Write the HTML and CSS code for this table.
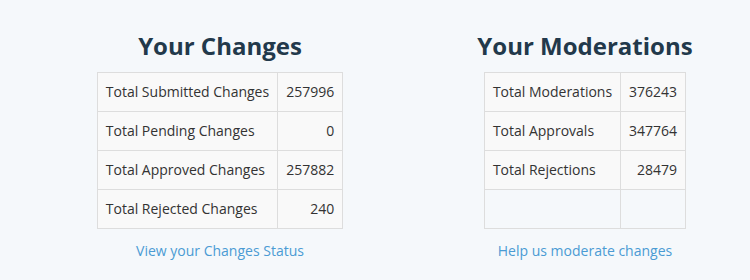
FILE: index.html
```html
<!DOCTYPE html>
<html>
<head>
<meta charset="utf-8">
<link rel="stylesheet" href="styles.css">
</head>
<body>
<main class="stats">
  <section class="panel">
    <h2 class="panel-title">Your Changes</h2>
    <table class="stat-table">
      <tr><td class="label">Total Submitted Changes</td><td class="num">257996</td></tr>
      <tr><td class="label">Total Pending Changes</td><td class="num">0</td></tr>
      <tr><td class="label">Total Approved Changes</td><td class="num">257882</td></tr>
      <tr><td class="label">Total Rejected Changes</td><td class="num">240</td></tr>
    </table>
    <a class="panel-link" href="#">View your Changes Status</a>
  </section>
  <section class="panel">
    <h2 class="panel-title">Your Moderations</h2>
    <table class="stat-table">
      <tr><td class="label">Total Moderations</td><td class="num">376243</td></tr>
      <tr><td class="label">Total Approvals</td><td class="num">347764</td></tr>
      <tr><td class="label">Total Rejections</td><td class="num">28479</td></tr>
      <tr class="empty"><td class="label">&nbsp;</td><td class="num">&nbsp;</td></tr>
    </table>
    <a class="panel-link" href="#">Help us moderate changes</a>
  </section>
</main>
</body>
</html>
```
FILE: styles.css
```css
html, body {
  margin: 0;
  padding: 0;
  overflow: hidden;
  background: #f5f8fb;
}
body {
  font-family: "Open Sans", "Liberation Sans", sans-serif;
  font-size: 14px;
  color: #333;
}
.stats {
  display: grid;
  grid-template-columns: 364px 364px;
  column-gap: 1px;
  padding-left: 38px;
}
.panel {
  display: flex;
  flex-direction: column;
  align-items: center;
}
.panel-title {
  margin: 28px 0 8px;
  font-size: 24px;
  line-height: 36px;
  font-weight: 700;
  color: #22394b;
}
.stat-table {
  border-collapse: collapse;
  border: 1px solid #dddddd;
}
.stat-table td {
  border: 1px solid #dddddd;
  padding: 8px;
  line-height: 22px;
  background: #f9f9f9;
}
.stat-table .num {
  text-align: right;
}
.stat-table .empty td {
  background: transparent;
}
.panel-link {
  margin-top: 11px;
  line-height: 22px;
  color: #4a9bd4;
  text-decoration: none;
}
```
